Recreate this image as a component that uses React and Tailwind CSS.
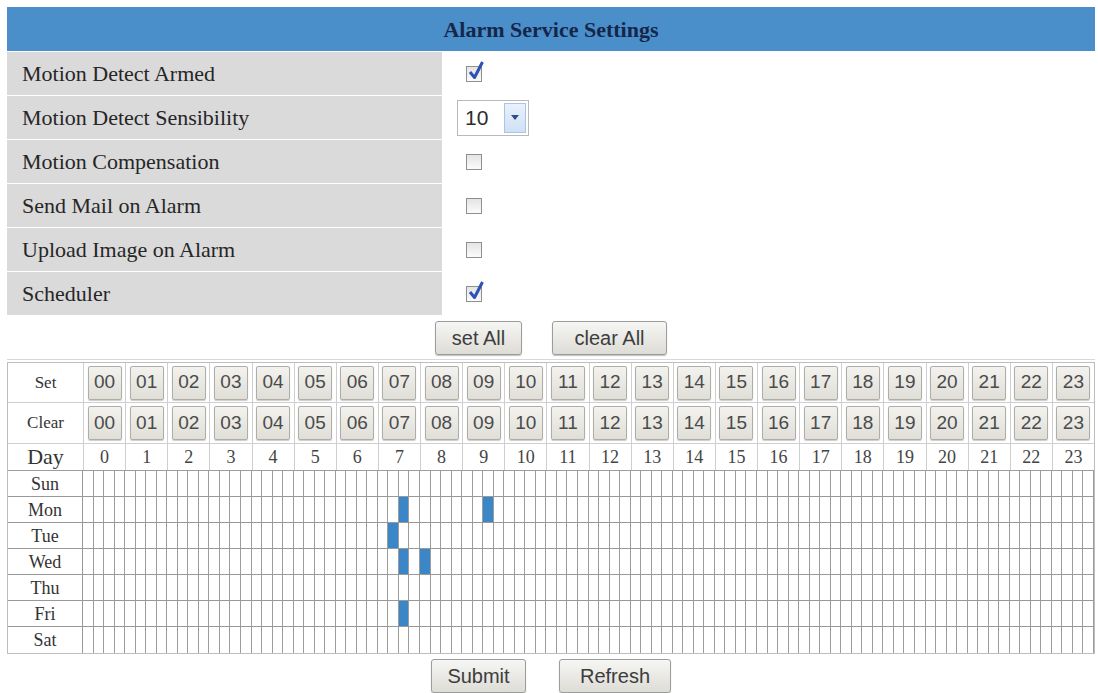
import { useState } from "react";

const serif = "font-['Liberation_Serif','Times_New_Roman',serif]";
const sans = "font-['Liberation_Sans',Arial,sans-serif]";

const days = ["Sun", "Mon", "Tue", "Wed", "Thu", "Fri", "Sat"];
const hours = Array.from({ length: 24 }, (_, i) => i);

// quarter-hour slots that are switched on (hour * 4 + quarter)
const initialSchedule = {
  Mon: [30, 38],
  Tue: [29],
  Wed: [30, 32],
  Fri: [30],
};

const pad = (n) => (n < 10 ? "0" + n : "" + n);

function CheckBox({ checked, onChange }) {
  return (
    <button
      onClick={onChange}
      className="relative ml-[9px] h-[16px] w-[16px] border border-[#8e8f8f] bg-gradient-to-b from-[#e4e4e4] to-[#fbfbfb]"
    >
      {checked && (
        <svg
          viewBox="0 0 18 20"
          className="absolute left-[0px] top-[-6px] h-[20px] w-[18px] overflow-visible"
        >
          <path
            d="M3 11 L7.5 16.5 L15.5 1"
            fill="none"
            stroke="#2d52b4"
            strokeWidth="3"
            strokeLinejoin="round"
          />
        </svg>
      )}
    </button>
  );
}

function GrayButton({ children, className = "" }) {
  return (
    <button
      className={
        "h-[34px] rounded-[3px] border border-[#9c9c9c] bg-gradient-to-b from-[#f6f6f4] to-[#dedcd6] text-[20px] text-[#3d3d3d] shadow-[0_1px_1px_rgba(0,0,0,0.25)] " +
        sans +
        " " +
        className
      }
    >
      {children}
    </button>
  );
}

function HourButton({ h }) {
  return (
    <div className="flex items-center justify-center border-l border-[#cfcfcf]">
      <button
        className={
          "flex h-[34px] w-[34px] items-center justify-center rounded-[2px] border border-[#aeaea9] bg-gradient-to-b from-[#f3f2ee] to-[#e0ded7] text-[19px] text-[#4b4b4b] shadow-[0_1px_1px_rgba(0,0,0,0.2)] " +
          sans
        }
      >
        {pad(h)}
      </button>
    </div>
  );
}

export default function App() {
  const [settings, setSettings] = useState({
    armed: true,
    compensation: false,
    mail: false,
    upload: false,
    scheduler: true,
  });
  const [schedule, setSchedule] = useState(initialSchedule);

  const toggle = (key) => setSettings((s) => ({ ...s, [key]: !s[key] }));

  const toggleSlot = (day, slot) => {
    setSchedule((prev) => {
      const cur = prev[day] || [];
      const next = cur.includes(slot)
        ? cur.filter((x) => x !== slot)
        : [...cur, slot];
      return { ...prev, [day]: next };
    });
  };

  const rows = [
    { label: "Motion Detect Armed", key: "armed" },
    { label: "Motion Detect Sensibility", select: true },
    { label: "Motion Compensation", key: "compensation" },
    { label: "Send Mail on Alarm", key: "mail" },
    { label: "Upload Image on Alarm", key: "upload" },
    { label: "Scheduler", key: "scheduler" },
  ];

  return (
    <div className="min-h-[693px] w-[1098px] bg-white pl-[7px] pr-[3px] pt-[7px]">
      {/* header */}
      <div
        className={
          "flex h-[44px] items-center justify-center bg-[#4b8fca] text-[22px] font-bold text-[#15264a] " +
          serif
        }
      >
        Alarm Service Settings
      </div>

      {/* settings rows */}
      <div className="flex flex-col">
        {rows.map((r) => (
          <div key={r.label} className="mt-[1px] flex h-[43px]">
            <div
              className={
                "flex w-[435px] items-center bg-[#dadada] pl-[15px] text-[22px] text-[#262626] " +
                serif
              }
            >
              {r.label}
            </div>
            <div className="flex flex-1 items-center pl-[15px]">
              {r.select ? (
                <div className="flex h-[36px] w-[72px] items-center border border-[#b9b9b9] bg-white">
                  <span
                    className={"flex-1 pl-[7px] text-[21px] text-[#2c2c2c] " + sans}
                  >
                    10
                  </span>
                  <span className="mr-[2px] flex h-[30px] w-[22px] items-center justify-center border border-[#a9c4e6] bg-gradient-to-b from-[#e9f1fb] to-[#cfe0f5]">
                    <svg viewBox="0 0 8 5" className="h-[5px] w-[8px]">
                      <path d="M0 0 H8 L4 5 Z" fill="#2d4d86" />
                    </svg>
                  </span>
                </div>
              ) : (
                <CheckBox
                  checked={settings[r.key]}
                  onChange={() => toggle(r.key)}
                />
              )}
            </div>
          </div>
        ))}
      </div>

      {/* set all / clear all */}
      <div className="flex justify-center gap-[30px] pb-[4px] pt-[6px]">
        <GrayButton className="w-[87px]">set All</GrayButton>
        <GrayButton className="w-[115px]">clear All</GrayButton>
      </div>

      {/* schedule table */}
      <div className="border-t border-[#d8d8d8] pt-[2px]">
        <div className="border border-[#bdbdbd]">
          <div className="grid h-[40px] grid-cols-[75px_repeat(24,1fr)] border-b border-[#cfcfcf]">
            <div
              className={"flex items-center justify-center text-[17px] text-[#333] " + serif}
            >
              Set
            </div>
            {hours.map((h) => (
              <HourButton key={h} h={h} />
            ))}
          </div>
          <div className="grid h-[41px] grid-cols-[75px_repeat(24,1fr)] border-b border-[#cfcfcf]">
            <div
              className={"flex items-center justify-center text-[17px] text-[#333] " + serif}
            >
              Clear
            </div>
            {hours.map((h) => (
              <HourButton key={h} h={h} />
            ))}
          </div>
          <div
            className={
              "grid h-[27px] grid-cols-[75px_repeat(24,1fr)] border-b border-[#9d9d9d] " +
              serif
            }
          >
            <div className="flex items-center justify-center text-[22px] leading-none text-[#333]">
              Day
            </div>
            {hours.map((h) => (
              <div
                key={h}
                className="flex items-center justify-center border-l border-[#cfcfcf] text-[18px] leading-none text-[#444]"
              >
                {h}
              </div>
            ))}
          </div>
          {days.map((d, i) => (
            <div
              key={d}
              className={
                "flex h-[26px] " +
                (i < days.length - 1 ? "border-b border-[#999]" : "")
              }
            >
              <div
                className={
                  "flex w-[75px] shrink-0 items-center justify-center border-r border-[#999] text-[18px] leading-none text-[#333] " +
                  serif
                }
              >
                {d}
              </div>
              {Array.from({ length: 96 }, (_, s) => (
                <div
                  key={s}
                  onClick={() => toggleSlot(d, s)}
                  className={
                    "flex-1 border-r border-[#9c9c9c] " +
                    ((schedule[d] || []).includes(s) ? "bg-[#3a86c6]" : "bg-white")
                  }
                />
              ))}
            </div>
          ))}
        </div>
      </div>

      {/* submit / refresh */}
      <div className="flex justify-center gap-[33px] pt-[5px]">
        <GrayButton className="w-[95px]">Submit</GrayButton>
        <GrayButton className="w-[112px]">Refresh</GrayButton>
      </div>
    </div>
  );
}
